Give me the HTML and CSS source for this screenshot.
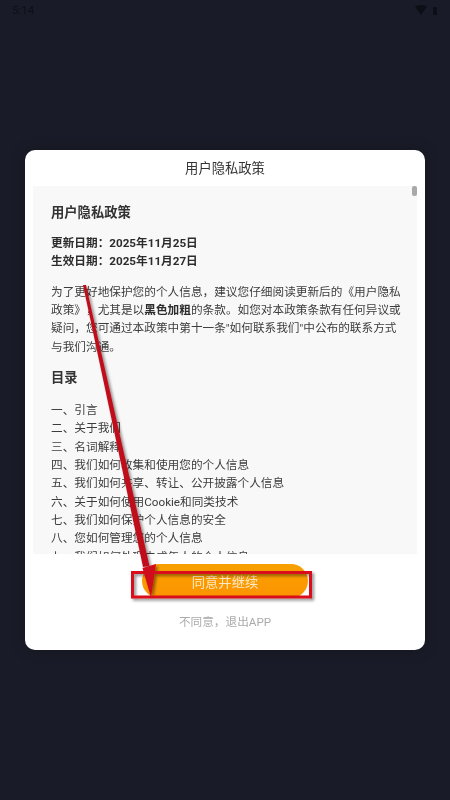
FILE: index.html
```html
<!DOCTYPE html>
<html lang="zh-CN">
<head>
<meta charset="utf-8">
<title>用户隐私政策</title>
<link rel="stylesheet" href="styles.css">
</head>
<body>
<div class="screen">
  <div class="status">
    <span class="time">5:14</span>
    <span class="status-icons">
      <svg width="12" height="10" viewBox="0 0 12 10"><path d="M0 1.500C3.500-.5 8.500-.5 12 1.500L6 10z" fill="#0d0f16"/></svg>
      <svg width="6" height="9" viewBox="0 0 6 9"><path d="M1 1h4v8H1z" fill="#0d0f16"/></svg>
    </span>
  </div>
  <div class="modal">
    <h1 class="modal-title">用户隐私政策</h1>
    <div class="policy">
      <div class="thumb"></div>
      <h2 class="policy-heading">用户隐私政策</h2>
      <p class="dates"><strong>更新日期：2025年11月25日</strong><br><strong>生效日期：2025年11月27日</strong></p>
      <p class="intro">为了更好地保护您的个人信息，建议您仔细阅读更新后的《用户隐私政策》，尤其是以<strong>黑色加粗</strong>的条款。如您对本政策条款有任何异议或疑问，您可通过本政策中第十一条"如何联系我们"中公布的联系方式与我们沟通。</p>
      <h2 class="policy-heading toc-heading">目录</h2>
      <ul class="toc">
        <li>一、引言</li>
        <li>二、关于我们</li>
        <li>三、名词解释</li>
        <li>四、我们如何收集和使用您的个人信息</li>
        <li>五、我们如何共享、转让、公开披露个人信息</li>
        <li>六、关于如何使用Cookie和同类技术</li>
        <li>七、我们如何保护个人信息的安全</li>
        <li>八、您如何管理您的个人信息</li>
        <li>九、我们如何处理未成年人的个人信息</li>
      </ul>
    </div>
    <div class="actions">
      <button class="agree">同意并继续</button>
      <button class="decline">不同意，退出APP</button>
    </div>
  </div>
  <svg class="annotation" width="450" height="800" viewBox="0 0 450 800">
    <defs><filter id="sh" x="-20%" y="-20%" width="140%" height="140%"><feDropShadow dx="2" dy="2" stdDeviation="1.500" flood-color="#000" flood-opacity=".45"/></filter></defs>
    <g filter="url(#sh)">
      <rect x="132.500" y="572.500" width="178" height="24.500" fill="none" stroke="#d9101a" stroke-width="3"/>
      <path d="M83 285 L86 285 L149.500 566 L143 567z" fill="#c0101a"/>
      <path d="M151 597.500 L142.500 568 L156 564z" fill="#d0101a"/>
    </g>
  </svg>
</div>
</body>
</html>
```
FILE: styles.css
```css
* { box-sizing: border-box; }
html, body { margin: 0; padding: 0; }
body { width: 450px; height: 800px; overflow: hidden; background: #191c28; font-family: Roboto, "Noto Sans CJK SC", sans-serif; text-spacing-trim: space-all; }
.screen { position: relative; width: 450px; height: 800px; display: flex; flex-direction: column; align-items: center; background: #191c28; filter: blur(.35px); }
.status { width: 100%; height: 150px; flex: none; display: flex; justify-content: space-between; align-items: flex-start; padding: 3px 12px; color: #0d0f16; font-size: 11.500px; }
.status-icons { display: flex; gap: 5px; align-items: center; padding-top: 2px; }
.modal { width: 400px; height: 500px; flex: none; background: #fff; border-radius: 10px; display: flex; flex-direction: column; padding: 0 8px; box-shadow: 0 0 14px rgba(0,0,0,.25); }
.modal-title { margin: 0; height: 36px; flex: none; display: flex; align-items: center; justify-content: center; font-size: 13.300px; font-weight: 400; color: #333; padding-bottom: 2px; }
.policy { position: relative; height: 368px; flex: none; overflow: hidden; background: #f8f8f8; padding: 18px 14px 0 18px; color: #3c3c3c; font-size: 11.670px; line-height: 18.330px; }
.thumb { position: absolute; top: 0; right: 0; width: 5px; height: 10px; border-radius: 2px; background: #a9a9a9; }
.policy-heading { margin: 0; font-size: 13.300px; line-height: 18px; font-weight: 700; color: #333; }
.policy strong { font-weight: 700; color: #2c2c2c; }
.dates { margin: 12px 0 0; }
.intro { margin: 12px 0 0; }
.toc-heading { margin-top: 13px; }
.toc { list-style: none; margin: 14px 0 0; padding: 0; }
.actions { flex: 1; display: flex; flex-direction: column; align-items: center; }
.agree { width: 166px; height: 34px; margin-top: 10px; flex: none; border: 0; border-radius: 17px; background: linear-gradient(180deg, #f7a000, #fd9400); color: #ffe9c4; font: inherit; font-size: 13.300px; }
.decline { margin-top: 15px; border: 0; background: none; padding: 0; font: inherit; font-size: 11.670px; line-height: 18px; color: #aaa; }
.annotation { position: absolute; left: 0; top: 0; pointer-events: none; }
```
